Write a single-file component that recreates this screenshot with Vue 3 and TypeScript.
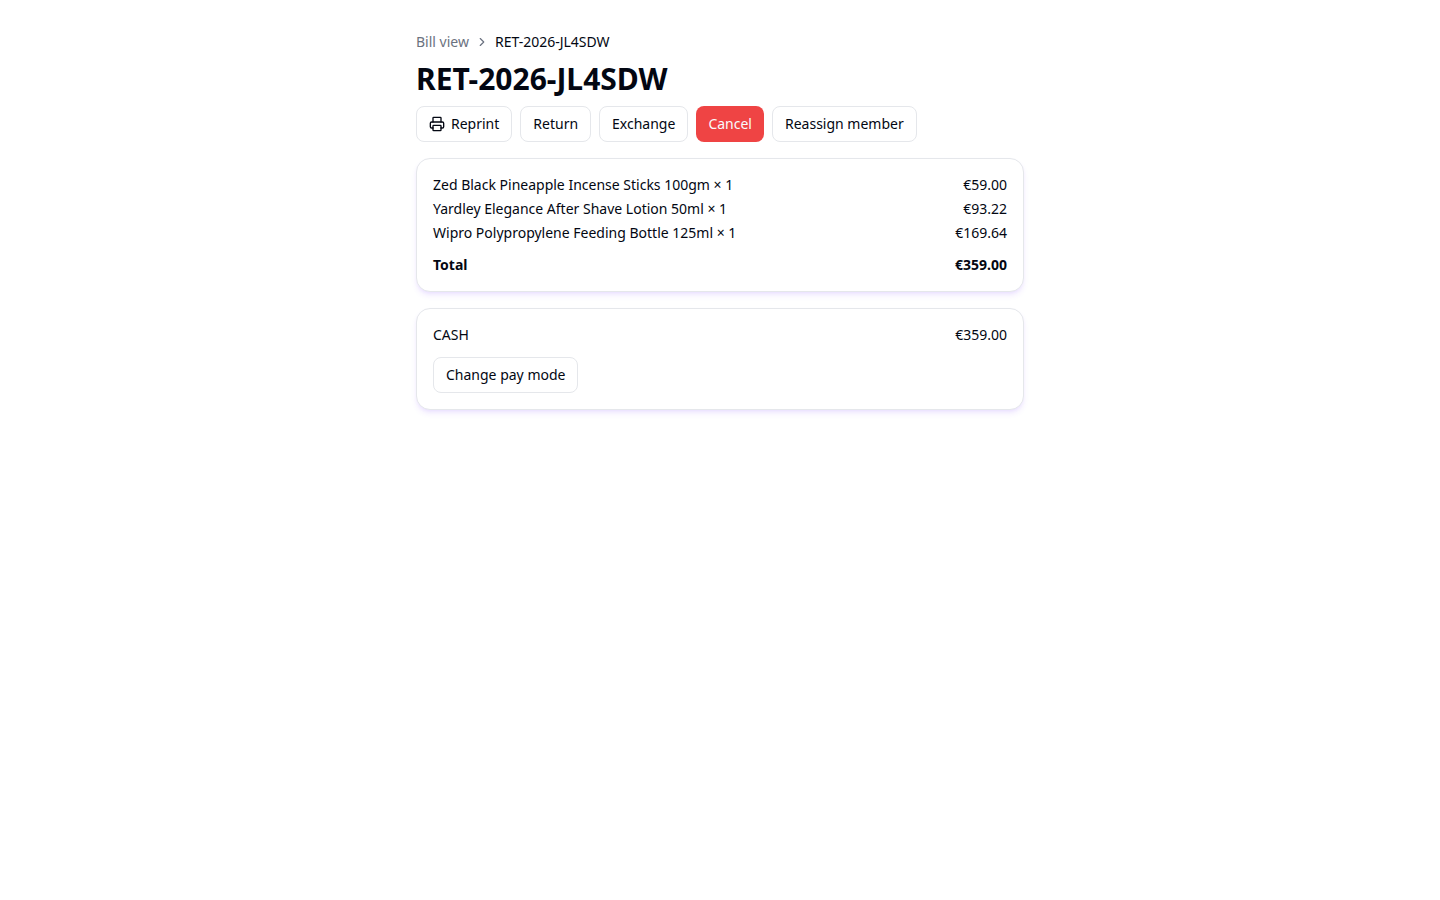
<script setup lang="ts">
interface Line {
  name: string
  qty: number
  amount: number
}

const billNo = 'RET-2026-JL4SDW'
const lines: Line[] = [
  { name: 'Zed Black Pineapple Incense Sticks 100gm', qty: 1, amount: 59 },
  { name: 'Yardley Elegance After Shave Lotion 50ml', qty: 1, amount: 93.22 },
  { name: 'Wipro Polypropylene Feeding Bottle 125ml', qty: 1, amount: 169.64 },
]
const total = 359

const money = (value: number): string => `€${value.toFixed(2)}`
</script>

<template>
  <main class="page">
    <header class="header">
      <nav class="crumbs" aria-label="Breadcrumb">
        <a href="#" class="crumb-link">Bill view</a>
        <svg class="chevron" viewBox="0 0 24 24" aria-hidden="true"><path d="m9 18 6-6-6-6" /></svg>
        <span aria-current="page">{{ billNo }}</span>
      </nav>
      <h1 class="title">{{ billNo }}</h1>
      <div class="actions">
        <button type="button" class="btn">
          <svg class="icon" viewBox="0 0 24 24" aria-hidden="true">
            <path d="M6 18H4a2 2 0 0 1-2-2v-5a2 2 0 0 1 2-2h16a2 2 0 0 1 2 2v5a2 2 0 0 1-2 2h-2" />
            <path d="M6 9V3a1 1 0 0 1 1-1h10a1 1 0 0 1 1 1v6" />
            <rect x="6" y="14" width="12" height="8" rx="1" />
          </svg>
          Reprint
        </button>
        <button type="button" class="btn">Return</button>
        <button type="button" class="btn">Exchange</button>
        <button type="button" class="btn danger">Cancel</button>
        <button type="button" class="btn">Reassign member</button>
      </div>
    </header>

    <section class="card" aria-label="Items">
      <div class="lines">
        <div v-for="line in lines" :key="line.name" class="row">
          <span>{{ line.name }} × {{ line.qty }}</span>
          <span>{{ money(line.amount) }}</span>
        </div>
      </div>
      <div class="row total">
        <span>Total</span>
        <span>{{ money(total) }}</span>
      </div>
    </section>

    <section class="card" aria-label="Payment">
      <div class="row">
        <span>CASH</span>
        <span>{{ money(total) }}</span>
      </div>
      <button type="button" class="btn">Change pay mode</button>
    </section>
  </main>
</template>

<style>
body {
  margin: 0;
  background: #ffffff;
}
</style>

<style scoped>
.page {
  box-sizing: border-box;
  max-width: 672px;
  margin: 0 auto;
  padding: 32px;
  display: flex;
  flex-direction: column;
  gap: 16px;
  color: #030712;
  font-family: "Noto Sans", sans-serif;
  font-size: 14px;
  line-height: 20px;
}

.header {
  display: flex;
  flex-direction: column;
  gap: 8px;
}

.crumbs {
  display: flex;
  align-items: center;
  gap: 6px;
}

.crumb-link {
  color: #6b7280;
  text-decoration: none;
}

.chevron,
.icon {
  flex: none;
  fill: none;
  stroke: currentColor;
  stroke-width: 2;
  stroke-linecap: round;
  stroke-linejoin: round;
}

.chevron {
  width: 14px;
  height: 14px;
  color: #6b7280;
}

.icon {
  width: 16px;
  height: 16px;
}

.title {
  margin: 0;
  font-size: 30px;
  line-height: 38px;
  font-weight: 700;
}

.actions {
  display: flex;
  flex-wrap: wrap;
  gap: 8px;
}

.btn {
  box-sizing: border-box;
  height: 36px;
  padding: 0 12px;
  display: inline-flex;
  align-items: center;
  justify-content: center;
  gap: 6px;
  border: 1px solid #e5e7eb;
  border-radius: 8px;
  background: #ffffff;
  color: inherit;
  font: inherit;
  white-space: nowrap;
  cursor: pointer;
}

.danger {
  border: 0;
  background: #ef4444;
  color: #f9fafb;
}

.card {
  padding: 16px;
  display: flex;
  flex-direction: column;
  align-items: flex-start;
  gap: 12px;
  border: 1px solid #e5e7eb;
  border-radius: 14px;
  background: #ffffff;
  box-shadow:
    0 4px 6px -1px rgba(109, 40, 255, 0.1),
    0 2px 4px -2px rgba(109, 40, 255, 0.1);
}

.lines {
  width: 100%;
  display: flex;
  flex-direction: column;
  gap: 4px;
}

.row {
  width: 100%;
  display: flex;
  justify-content: space-between;
  gap: 16px;
}

.total {
  font-weight: 700;
}
</style>
